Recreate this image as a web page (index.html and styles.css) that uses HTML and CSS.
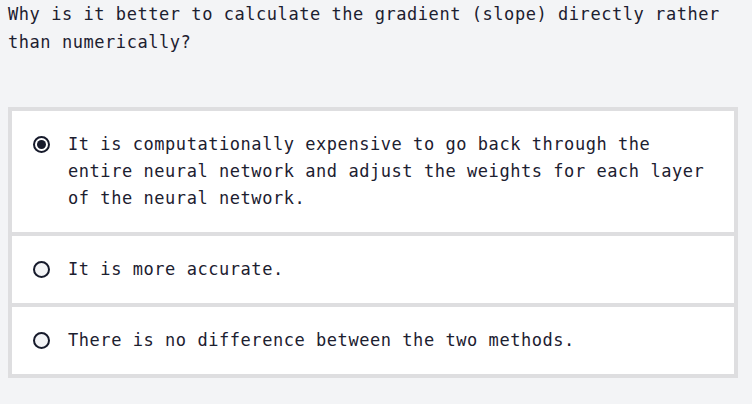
FILE: index.html
```html
<!DOCTYPE html>
<html lang="en">
<head>
<meta charset="utf-8">
<title>Quiz</title>
<link rel="stylesheet" href="styles.css">
</head>
<body>
<main class="quiz">
  <p class="question">Why is it better to calculate the gradient (slope) directly rather than numerically?</p>
  <div class="options">
    <label class="option">
      <span class="radio checked"></span>
      <span class="option-text">It is computationally expensive to go back through the entire neural network and adjust the weights for each layer of the neural network.</span>
    </label>
    <label class="option">
      <span class="radio"></span>
      <span class="option-text">It is more accurate.</span>
    </label>
    <label class="option">
      <span class="radio"></span>
      <span class="option-text">There is no difference between the two methods.</span>
    </label>
  </div>
</main>
</body>
</html>
```
FILE: styles.css
```css
html, body {
  margin: 0;
  padding: 0;
  background: #f3f4f6;
}

body {
  font-family: "DejaVu Sans Mono", "Liberation Mono", monospace;
  font-size: 17px;
  letter-spacing: 0.55px;
  line-height: 27.5px;
  color: #1c2030;
}

.quiz {
  padding: 1px 14px 0 8px;
}

.question {
  margin: 0;
  width: 730px;
}

.options {
  margin-top: 51px;
  display: flex;
  flex-direction: column;
  gap: 4px;
  padding: 4px;
  background: #dedee0;
  width: 722px;
}

.option {
  display: flex;
  align-items: flex-start;
  gap: 18px;
  background: #ffffff;
  padding: 20px 20px 20px 21px;
  line-height: 27px;
}

.radio {
  flex: none;
  box-sizing: border-box;
  width: 17px;
  height: 17px;
  margin-top: 5px;
  border: 2px solid #161a2b;
  border-radius: 50%;
  background: #f3f4f6;
  display: flex;
  align-items: center;
  justify-content: center;
}

.radio.checked {
  background: #ffffff;
}

.radio.checked::after {
  content: "";
  width: 9px;
  height: 9px;
  border-radius: 50%;
  background: #161a2b;
}

.option-text {
  flex: 1;
}
```
